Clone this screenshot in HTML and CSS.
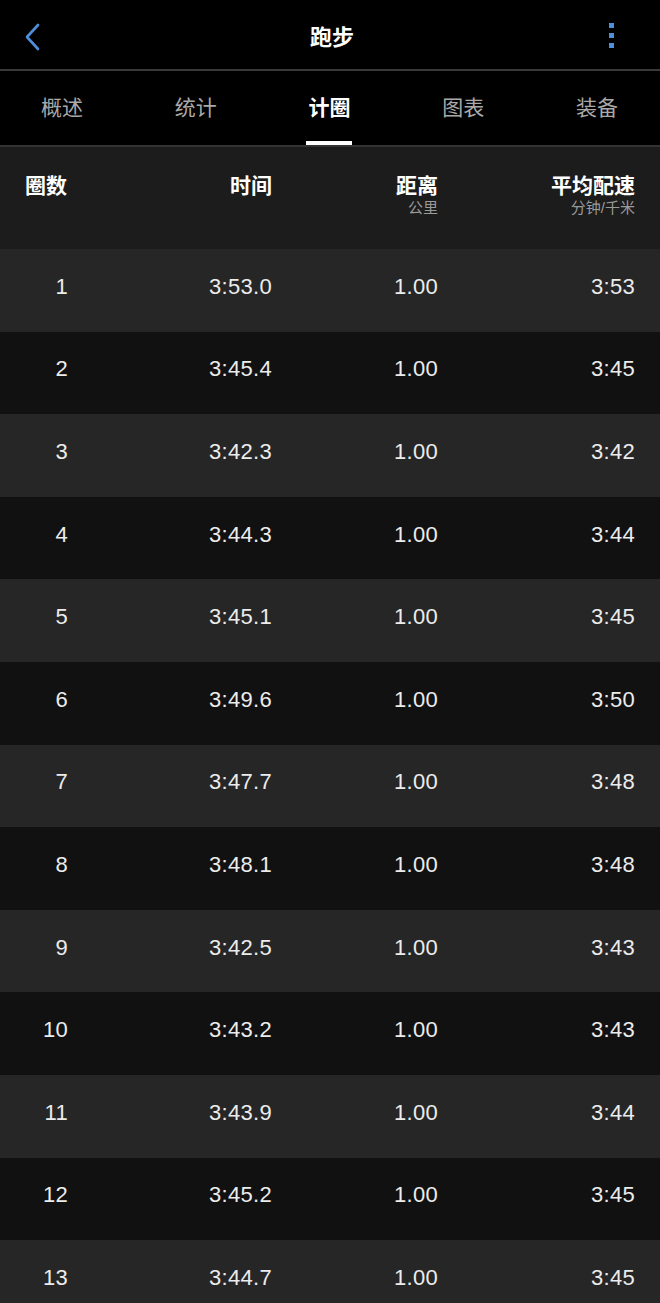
FILE: index.html
```html
<!DOCTYPE html>
<html lang="zh-CN">
<head>
    <meta charset="UTF-8">
    <meta name="viewport" content="width=device-width, initial-scale=1.0">
    <title>跑步</title>
    <link rel="stylesheet" href="styles.css">
</head>
<body>

    <div class="topbar">
        <span class="back">
            <svg width="20" height="30" viewBox="0 0 20 30"><polyline points="14,3 3,15 14,27" fill="none" stroke="#4d8fdc" stroke-width="2.6" stroke-linecap="round" stroke-linejoin="round"/></svg>
        </span>
        <h1>跑步</h1>
        <span class="more"><i></i><i></i><i></i></span>
    </div>

    <div class="tabbar">
        <div class="tabs">
            <div class="tab">概述</div>
            <div class="tab">统计</div>
            <div class="tab active">计圈</div>
            <div class="tab">图表</div>
            <div class="tab">装备</div>
        </div>
    </div>

    <div class="laps">
        <div class="row head">
            <div>圈数</div>
            <div>时间</div>
            <div>距离<small>公里</small></div>
            <div>平均配速<small>分钟/千米</small></div>
        </div>
        <div class="row"><div>1</div><div>3:53.0</div><div>1.00</div><div>3:53</div></div>
        <div class="row"><div>2</div><div>3:45.4</div><div>1.00</div><div>3:45</div></div>
        <div class="row"><div>3</div><div>3:42.3</div><div>1.00</div><div>3:42</div></div>
        <div class="row"><div>4</div><div>3:44.3</div><div>1.00</div><div>3:44</div></div>
        <div class="row"><div>5</div><div>3:45.1</div><div>1.00</div><div>3:45</div></div>
        <div class="row"><div>6</div><div>3:49.6</div><div>1.00</div><div>3:50</div></div>
        <div class="row"><div>7</div><div>3:47.7</div><div>1.00</div><div>3:48</div></div>
        <div class="row"><div>8</div><div>3:48.1</div><div>1.00</div><div>3:48</div></div>
        <div class="row"><div>9</div><div>3:42.5</div><div>1.00</div><div>3:43</div></div>
        <div class="row"><div>10</div><div>3:43.2</div><div>1.00</div><div>3:43</div></div>
        <div class="row"><div>11</div><div>3:43.9</div><div>1.00</div><div>3:44</div></div>
        <div class="row"><div>12</div><div>3:45.2</div><div>1.00</div><div>3:45</div></div>
        <div class="row"><div>13</div><div>3:44.7</div><div>1.00</div><div>3:45</div></div>
    </div>

</body>
</html>
```

FILE: styles.css
```css
body {
    margin: 0;
    background: #000;
    color: #fff;
    font-family: "Liberation Sans", "Noto Sans CJK SC", sans-serif;
    height: 1303px;
    overflow: hidden;
}
.topbar {
    height: 69px;
    display: flex;
    align-items: center;
    justify-content: space-between;
    padding: 0 20px 0 24px;
    border-bottom: 2px solid #3a3a3a;
}
.topbar h1 {
    margin: 0;
    font-size: 22px;
    font-weight: bold;
    font-family: "Noto Sans CJK SC", sans-serif;
}
.back {
    width: 40px;
    display: flex;
    margin-top: 4px;
}
.more {
    width: 40px;
    display: flex;
    flex-direction: column;
    align-items: flex-end;
    gap: 5px;
    padding-right: 26px;
    box-sizing: border-box;
    margin-top: 1px;
}
.more i {
    width: 5px;
    height: 5px;
    background: #4d8fdc;
}
.tabbar {
    height: 74px;
    border-bottom: 2px solid #333;
    overflow: hidden;
}
.tabs {
    display: grid;
    grid-template-columns: repeat(5, 1fr);
    width: 669px;
    height: 100%;
    margin-left: -5px;
}
.tab {
    display: flex;
    align-items: center;
    justify-content: center;
    font-family: "Noto Sans CJK SC", sans-serif;
    font-size: 21px;
    color: #a9a9a9;
    padding-bottom: 4px;
    position: relative;
}
.tab.active {
    color: #fff;
    font-weight: bold;
}
.tab.active::after {
    content: "";
    position: absolute;
    bottom: 0;
    left: 50%;
    width: 46px;
    height: 4px;
    margin-left: -23px;
    background: #fff;
}
.row {
    display: grid;
    grid-template-columns: 68px 204px 166px 197px;
    height: 82.6px;
    padding-bottom: 7px;
    box-sizing: border-box;
    align-items: center;
    text-align: right;
    font-size: 22px;
    letter-spacing: 0.3px;
    color: #ececec;
}
.row:nth-child(even) {
    background: #262626;
}
.row:nth-child(odd) {
    background: #111;
}
.row.head {
    height: 102px;
    background: #1c1c1c;
    align-items: start;
    padding: 28px 0 0;
    font-weight: bold;
    font-size: 21px;
    letter-spacing: 0;
    line-height: 22px;
    color: #fff;
}
.row.head div:first-child {
    text-align: left;
    padding-left: 25px;
}
.row.head small {
    display: block;
    margin-top: 2px;
    font-size: 15px;
    line-height: 18px;
    font-weight: normal;
    color: #9a9a9a;
}
```
